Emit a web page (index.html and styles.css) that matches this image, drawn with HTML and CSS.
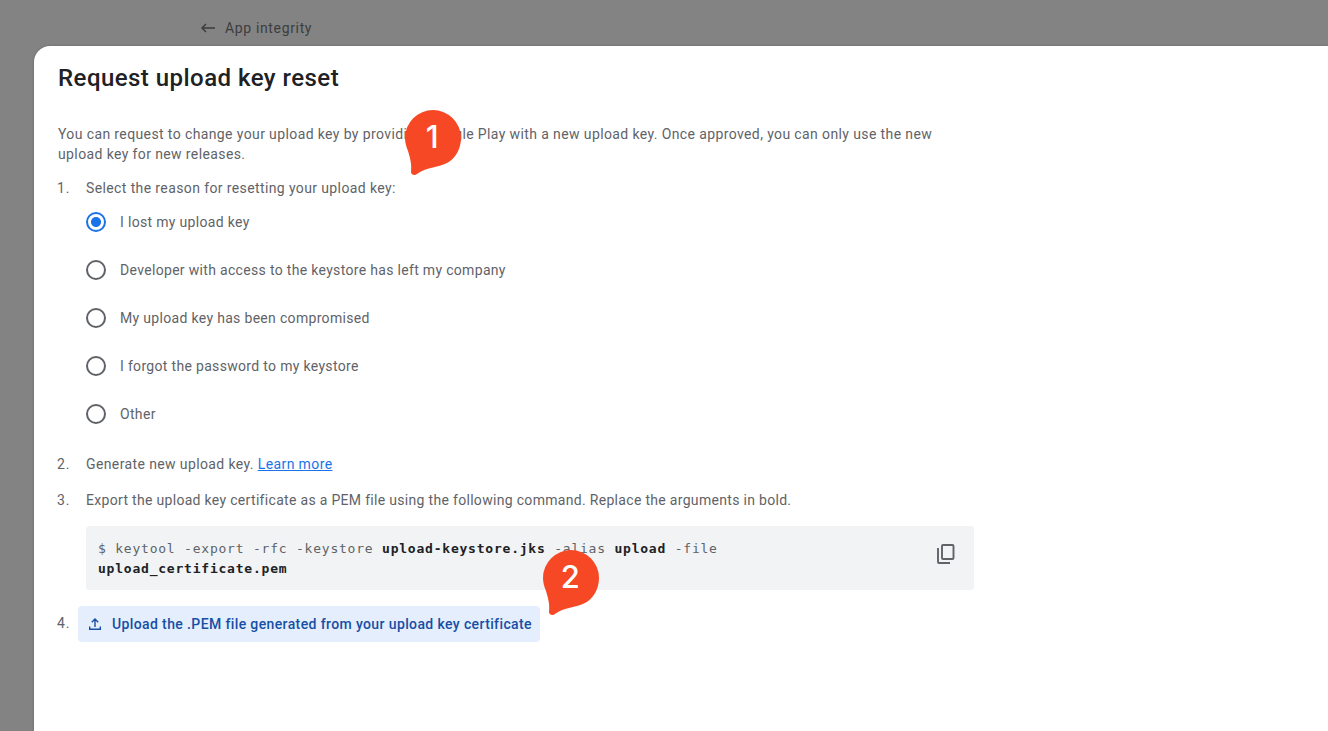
FILE: index.html
```html
<!DOCTYPE html>
<html lang="en">
<head>
    <meta charset="UTF-8">
    <meta name="viewport" content="width=device-width, initial-scale=1.0">
    <title>Request upload key reset</title>
    <link rel="stylesheet" href="styles.css">
</head>
<body>

<header class="topbar">
    <svg class="back" width="14" height="10" viewBox="0 0 14 10">
        <path d="M14 5H1.2M5 1L1 5l4 4" fill="none" stroke="currentColor" stroke-width="1.5"/>
    </svg>
    <span>App integrity</span>
</header>

<main class="dialog">
    <h1>Request upload key reset</h1>
    <p class="intro">You can request to change your upload key by providing Google Play with a new upload key. Once approved, you can only use the new<br>upload key for new releases.</p>

    <div class="step">
        <span class="num">1.</span>
        <div class="reason">
            <div>Select the reason for resetting your upload key:</div>
            <div class="options">
                <label><input type="radio" name="reason" checked><span>I lost my upload key</span></label>
                <label><input type="radio" name="reason"><span>Developer with access to the keystore has left my company</span></label>
                <label><input type="radio" name="reason"><span>My upload key has been compromised</span></label>
                <label><input type="radio" name="reason"><span>I forgot the password to my keystore</span></label>
                <label><input type="radio" name="reason"><span>Other</span></label>
            </div>
        </div>
    </div>

    <div class="step">
        <span class="num">2.</span>
        <div>Generate new upload key. <a href="#">Learn more</a></div>
    </div>

    <div class="step">
        <span class="num">3.</span>
        <div>
            <div class="export">Export the upload key certificate as a PEM file using the following command. Replace the arguments in bold.</div>
            <div class="command">
                <code>$ keytool -export -rfc -keystore <b>upload-keystore.jks</b> -alias <b>upload</b> -file <br><b>upload_certificate.pem</b></code>
                <svg class="copy" width="18" height="20" viewBox="0 0 18 20">
                    <rect x="5" y="1" width="11.5" height="14" rx="1" fill="none" stroke="currentColor" stroke-width="1.9"/>
                    <path d="M1 4v14a1 1 0 0 0 1 1h11" fill="none" stroke="currentColor" stroke-width="1.9"/>
                </svg>
            </div>
        </div>
    </div>

    <div class="step last">
        <span class="num">4.</span>
        <button class="upload">
            <svg width="12" height="12" viewBox="0 0 12 12">
                <path d="M6 9V1.2M2.8 4.2L6 1l3.2 3.2M.7 8.5v2.8h10.6V8.5" fill="none" stroke="currentColor" stroke-width="1.4"/>
            </svg>
            <span>Upload the .PEM file generated from your upload key certificate</span>
        </button>
    </div>
</main>

<div class="marker first">
    <svg width="58" height="68" viewBox="0 0 58 68">
        <path d="M29 1a28 28 0 0 1 28 28c0 11-6 21-14 25-9 5-21 4-30 11-2 2-6 1-6-2 1-8-1-14-3-21C2 37 1 33 1 29A28 28 0 0 1 29 1z"/>
    </svg>
    <span>1</span>
</div>
<div class="marker second">
    <svg width="58" height="68" viewBox="0 0 58 68">
        <path d="M29 1a28 28 0 0 1 28 28c0 11-6 21-14 25-9 5-21 4-30 11-2 2-6 1-6-2 1-8-1-14-3-21C2 37 1 33 1 29A28 28 0 0 1 29 1z"/>
    </svg>
    <span>2</span>
</div>

</body>
</html>
```

FILE: styles.css
```css
* {
    box-sizing: border-box;
}
body {
    margin: 0;
    height: 100vh;
    overflow: hidden;
    display: flex;
    flex-direction: column;
    background-color: #838383;
    font-family: Roboto, sans-serif;
    font-size: 14px;
    line-height: 20px;
    letter-spacing: 0.385px;
    color: #5f6368;
    white-space: nowrap;
}
.topbar {
    height: 46px;
    flex: none;
    padding: 18px 0 0 201px;
    display: flex;
    gap: 10px;
    color: #3c3d3f;
    letter-spacing: 0.65px;
}
.back {
    margin-top: 5px;
}
.dialog {
    flex: 1;
    margin-left: 34px;
    padding: 16px 24px;
    background-color: white;
    border-radius: 16px 0 0 0;
    box-shadow: 0 0 3px rgba(0, 0, 0, 0.2);
}
h1 {
    margin: 0;
    font-size: 24px;
    line-height: 32px;
    font-weight: 500;
    letter-spacing: 0.46px;
    color: #202124;
}
.intro {
    margin: 30px 0 14px;
}
.step {
    display: flex;
    margin-bottom: 16px;
}
.num {
    width: 28px;
    flex: none;
    letter-spacing: 1px;
    text-indent: -1px;
}
.options {
    display: flex;
    flex-direction: column;
    letter-spacing: 0.32px;
}
.options label {
    height: 48px;
    display: flex;
    align-items: center;
    gap: 14px;
}
input[type="radio"] {
    appearance: none;
    width: 20px;
    height: 20px;
    margin: 0;
    border: 2px solid #5f6368;
    border-radius: 50%;
}
input[type="radio"]:checked {
    border-color: #1a73e8;
    background: radial-gradient(circle, #1a73e8 4.6px, white 5.4px);
}
a {
    color: #1a73e8;
}
.export {
    letter-spacing: 0.31px;
}
.command {
    width: 888px;
    height: 64px;
    margin-top: 16px;
    padding: 12px 19px 12px 12px;
    display: flex;
    justify-content: space-between;
    background-color: #f1f3f4;
    border-radius: 4px;
}
code {
    margin-top: 1px;
    font-family: "DejaVu Sans Mono", monospace;
    font-size: 13px;
    letter-spacing: 0.78px;
}
code b {
    color: #202124;
}
.copy {
    margin-top: 6px;
}
.last {
    align-items: center;
}
.last .num {
    width: 20px;
    margin-top: -2px;
}
.upload {
    width: 462px;
    height: 36px;
    padding: 0 0 0 11px;
    display: flex;
    align-items: center;
    gap: 11px;
    border: 0;
    border-radius: 4px;
    background-color: #e4eefc;
    color: #174ea6;
    font: 500 14px Roboto, sans-serif;
    letter-spacing: 0.38px;
}
.marker {
    position: absolute;
    width: 58px;
    height: 68px;
    color: white;
    font: 500 31px Inter, sans-serif;
}
.marker path {
    fill: #f64825;
}
.marker span {
    position: absolute;
    top: 9px;
    left: 0;
    width: 57px;
    text-align: center;
}
.first {
    left: 404px;
    top: 109px;
}
.second {
    left: 542px;
    top: 549px;
}
```
